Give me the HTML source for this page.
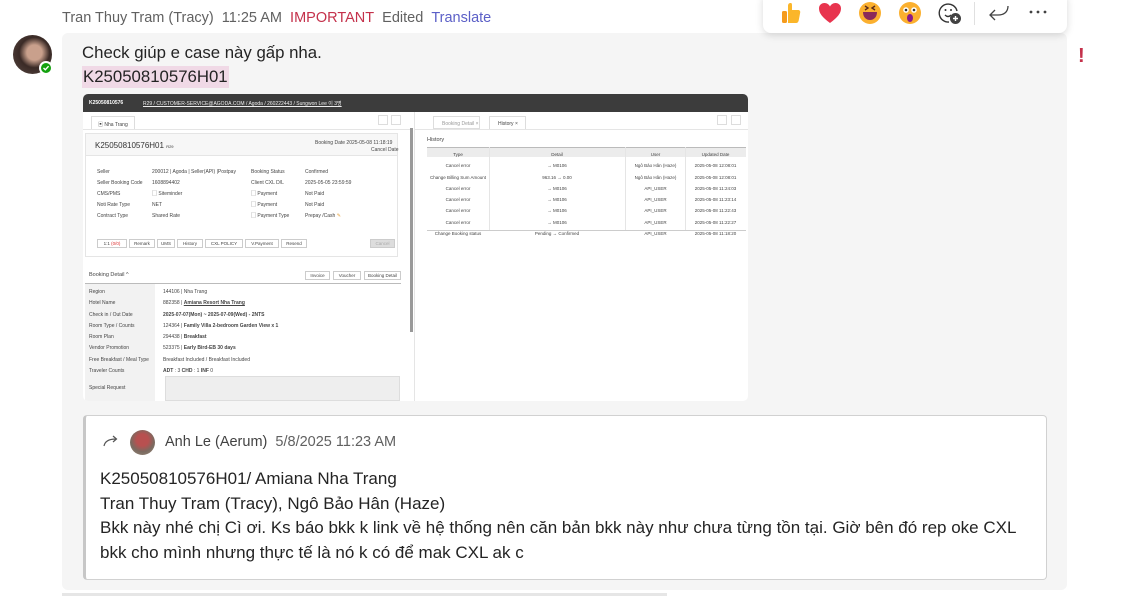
<!DOCTYPE html>
<html><head><meta charset="utf-8"><style>
*{margin:0;padding:0;box-sizing:border-box}
body{width:1128px;height:596px;background:#fff;font-family:"Liberation Sans","Noto Sans CJK SC",sans-serif;position:relative;overflow:hidden;color:#242424}
.a{position:absolute;white-space:nowrap}
.hdr{top:10px;left:62px;font-size:14.5px;color:#616161}
.bubble{left:62px;top:33px;width:1005px;height:557px;background:#f5f5f5;border-radius:6px}
.msg{font-size:16.8px;color:#242424}
.ss{left:83px;top:94px;width:665px;height:307px;background:#fff;border-radius:5px;overflow:hidden;font-size:5px;color:#444}
.ss .a{font-size:5px}
.b{font-weight:bold}
.btn{position:absolute;border:1px solid #ccc;height:9px;font-size:4.5px;line-height:8px;text-align:center;background:#fff}
.quote{left:83px;top:415px;width:964px;height:165px;background:#fff;border:1px solid #d1d1d1;border-left:3px solid #c7c7c7;border-radius:4px}
.q{font-size:17px;color:#242424}
.react{left:763px;top:-8px;width:304px;height:41px;background:#fff;border-radius:8px;box-shadow:0 2px 8px rgba(0,0,0,.15)}
.col{position:absolute;top:0;text-align:center;line-height:11.3px;font-size:4.5px!important}
</style></head><body>
<div class="a hdr">Tran Thuy Tram (Tracy)&nbsp;&nbsp;11:25 AM&nbsp;&nbsp;<span style="color:#c4314b">IMPORTANT</span>&nbsp;&nbsp;Edited&nbsp;&nbsp;<span style="color:#5b5fc7">Translate</span></div>
<div class="a" style="left:13px;top:35px;width:39px;height:39px;border-radius:50%;background:radial-gradient(circle at 55% 45%,#c9a08c 0 25%,#3a2a26 50%,#5a4a44 100%)"></div>
<div class="a" style="left:39px;top:61px;width:14px;height:14px;border-radius:50%;background:#13a10e;border:2px solid #fff"><svg width="10" height="10" viewBox="0 0 10 10" style="position:absolute;left:0;top:0"><path d="M2.5 5l1.8 1.8 3.3-3.6" stroke="#fff" stroke-width="1.4" fill="none"/></svg></div>
<div class="a bubble"></div>
<div class="a msg" style="left:82px;top:43px">Check giúp e case này gấp nha.</div>
<div class="a msg" style="left:82px;background:#f0d9e6;padding:0 1px;height:22px;line-height:22px;top:66px">K25050810576H01</div>
<div class="a" style="left:1078px;top:45px;color:#c4314b;font-size:20px;font-weight:bold">!</div>

<div class="a ss">
 <div class="a" style="left:0;top:0;width:665px;height:18px;background:#3c3c3c"></div>
 <div class="a b" style="left:6px;top:6px;color:#fff">K25050810576</div>
 <div class="a" style="left:60px;top:6px;color:#eee;text-decoration:underline">R29 / CUSTOMER-SERVICE@AGODA.COM / Agoda / 260222443 / Sungwon Lee 이 3명</div>
 <div class="a" style="left:8px;top:22px;width:44px;height:14px;border:1px solid #ddd;border-bottom:none;background:#fff;padding:4px 6px">▣ Nha Trang</div>
 <div class="a" style="left:0;top:35px;width:327px;height:1px;background:#e5e5e5"></div>
 <div class="a" style="left:295px;top:21px;width:10px;height:10px;border:1px solid #ddd"></div>
 <div class="a" style="left:308px;top:21px;width:10px;height:10px;border:1px solid #ddd"></div>
 <div class="a" style="left:2px;top:39px;width:313px;height:124px;border:1px solid #e5e5e5;background:#fff"></div>
 <div class="a" style="left:3px;top:40px;width:311px;height:22px;background:#f7f7f7;border-bottom:1px solid #e5e5e5"></div>
 <div class="a" style="left:12px;top:47px;font-size:8px;color:#333">K25050810576H01 <span style="font-size:4px">R29</span></div>
 <div class="a" style="left:232px;top:46px;text-align:right">Booking Date 2025-05-08 11:18:19</div>
 <div class="a" style="left:288px;top:53px">Cancel Date</div>
 <div class="a" style="left:14px;top:73px;line-height:11px">Seller<br>Seller Booking Code<br>CMS/PMS<br>Noti Rate Type<br>Contract Type</div>
 <div class="a" style="left:69px;top:73px;line-height:11px">200012 | Agoda | Seller(API) |Postpay<br>1608894402<br>▢ Siteminder<br>NET<br>Shared Rate</div>
 <div class="a" style="left:168px;top:73px;line-height:11px">Booking Status<br>Client CXL D/L<br>▢ Payment<br>▢ Payment<br>▢ Payment Type</div>
 <div class="a" style="left:222px;top:73px;line-height:11px">Confirmed<br>2025-05-05 23:59:59<br>Not Paid<br>Not Paid<br>Prepay /Cash <span style="color:#e8a33c">✎</span></div>
 <div class="btn" style="left:14px;top:145px;width:30px">1:1 <span style="color:#d33">(0/0)</span></div>
 <div class="btn" style="left:46px;top:145px;width:26px">Remark</div>
 <div class="btn" style="left:74px;top:145px;width:18px">UMS</div>
 <div class="btn" style="left:94px;top:145px;width:26px">History</div>
 <div class="btn" style="left:122px;top:145px;width:38px">CXL POLICY</div>
 <div class="btn" style="left:162px;top:145px;width:34px">V.Payment</div>
 <div class="btn" style="left:198px;top:145px;width:26px">Resend</div>
 <div class="btn" style="left:287px;top:145px;width:25px;background:#ddd;color:#aaa">Cancel</div>
 <div class="a" style="left:6px;top:178px;font-size:5.5px">Booking Detail ^</div>
 <div class="btn" style="left:222px;top:177px;width:25px">Invoice</div>
 <div class="btn" style="left:250px;top:177px;width:28px">Voucher</div>
 <div class="btn" style="left:281px;top:177px;width:37px">Booking Detail</div>
 <div class="a" style="left:2px;top:189px;width:316px;height:1px;background:#bbb"></div>
 <div class="a" style="left:2px;top:190px;width:70px;height:117px;background:#f2f2f2"></div>
 <div class="a" style="left:6px;top:193px;line-height:11.3px">Region<br>Hotel Name<br>Check in / Out Date<br>Room Type / Counts<br>Room Plan<br>Vendor Promotion<br>Free Breakfast / Meal Type<br>Traveler Counts</div>
 <div class="a" style="left:80px;top:193px;line-height:11.3px">144106 | Nha Trang<br>882358 | <b><u>Amiana Resort Nha Trang</u></b><br><b>2025-07-07(Mon) ~ 2025-07-09(Wed) - 2NTS</b><br>124364 | <b>Family Villa 2-bedroom Garden View x 1</b><br>294438 | <b>Breakfast</b><br>523375 | <b>Early Bird-EB 30 days</b><br>Breakfast Included / Breakfast Included<br><b>ADT</b> : 3 <b>CHD</b> : 1 <b>INF</b> 0</div>
 <div class="a" style="left:6px;top:291px">Special Request</div>
 <div class="a" style="left:82px;top:282px;width:235px;height:25px;background:#eee;border:1px solid #ddd"></div>
 <div class="a" style="left:327px;top:34px;width:3px;height:204px;background:#999"></div>
 <div class="a" style="left:331px;top:18px;width:1px;height:289px;background:#e5e5e5"></div>
 <div class="a" style="left:350px;top:22px;width:47px;height:13px;border:1px solid #ddd;padding:4px 8px;color:#999">Booking Detail ×</div>
 <div class="a" style="left:406px;top:22px;width:37px;height:14px;border:1px solid #ddd;border-bottom:none;background:#fff;padding:4px 8px">History ×</div>
 <div class="a" style="left:332px;top:35px;width:333px;height:1px;background:#e5e5e5"></div>
 <div class="a" style="left:634px;top:21px;width:10px;height:10px;border:1px solid #ddd"></div>
 <div class="a" style="left:648px;top:21px;width:10px;height:10px;border:1px solid #ddd"></div>
 <div class="a" style="left:344px;top:43px;font-size:5.5px">History</div>
 <div class="a" style="left:344px;top:53px;width:319px;height:10px;background:#ececec;border-top:1px solid #bbb"></div>
 <div class="a" style="left:344px;top:55px;width:319px;height:100px">
  <div class="col" style="left:0;width:62px">Type<br>Cancel error<br>Change Billing Sum Amount<br>Cancel error<br>Cancel error<br>Cancel error<br>Cancel error<br>Change Booking status</div>
  <div class="col" style="left:62px;width:136px">Detail<br>→ M0106<br>963.16 → 0.00<br>→ M0106<br>→ M0106<br>→ M0106<br>→ M0106<br>Pending → Confirmed</div>
  <div class="col" style="left:199px;width:59px">User<br>Ngô Bảo Hân (Haze)<br>Ngô Bảo Hân (Haze)<br>API_USER<br>API_USER<br>API_USER<br>API_USER<br>API_USER</div>
  <div class="col" style="left:258px;width:61px">Updated Date<br>2025-05-08 12:08:01<br>2025-05-08 12:08:01<br>2025-05-08 11:24:03<br>2025-05-08 11:23:14<br>2025-05-08 11:22:43<br>2025-05-08 11:22:27<br>2025-05-08 11:18:20</div>
  <div class="a" style="left:62px;top:-2px;width:1px;height:83px;background:#e5e5e5"></div>
  <div class="a" style="left:198px;top:-2px;width:1px;height:83px;background:#e5e5e5"></div>
  <div class="a" style="left:258px;top:-2px;width:1px;height:83px;background:#e5e5e5"></div>
  <div class="a" style="left:0;top:81px;width:319px;height:1px;background:#ccc"></div>
 </div>
</div>

<div class="a quote"></div>
<svg class="a" style="left:103px;top:434px" width="16" height="14" viewBox="0 0 16 14"><path d="M1 12c1-5 5-7 12-7M10 2l3.5 3-3.5 3" stroke="#555" stroke-width="1.2" fill="none"/></svg>
<div class="a" style="left:130px;top:430px;width:25px;height:25px;border-radius:50%;background:radial-gradient(circle at 50% 40%,#b85050 0 30%,#7a6a60 60%,#9a8a7a 100%)"></div>
<div class="a" style="left:165px;top:434px;font-size:14.5px;color:#424242">Anh Le (Aerum)&nbsp;&nbsp;<span style="color:#616161">5/8/2025 11:23 AM</span></div>
<div class="a q" style="left:100px;top:467px;line-height:24.5px">K25050810576H01/ Amiana Nha Trang<br>Tran Thuy Tram (Tracy), Ngô Bảo Hân (Haze)<br>Bkk này nhé chị Cì ơi. Ks báo bkk k link về hệ thống nên căn bản bkk này như chưa từng tồn tại. Giờ bên đó rep oke CXL<br>bkk cho mình nhưng thực tế là nó k có để mak CXL ak c</div>
<div class="a" style="left:62px;top:593px;width:605px;height:3px;background:#e6e6e6"></div>

<div class="a react"></div>
<svg class="a" style="left:818px;top:2px" width="24" height="22" viewBox="0 0 24 22"><path d="M12 21C4 15 1 11 1 6.5 1 3 3.5 1 6.5 1 9 1 11 2.5 12 4.5 13 2.5 15 1 17.5 1 20.5 1 23 3 23 6.5 23 11 20 15 12 21z" fill="#e8344e"/></svg>
<svg class="a" style="left:779px;top:1px" width="24" height="24" viewBox="0 0 24 24"><path d="M9 10V5c0-2 1-3 2.5-3S13 3 13 5v4h6c1.5 0 2.5 1 2.2 2.5l-1.5 8C19.4 21 18.5 22 17 22H9z" fill="#fbb62a"/><rect x="3" y="10" width="5" height="12" rx="1.5" fill="#f59b1c"/></svg>
<svg class="a" style="left:858px;top:1px" width="24" height="24"><circle cx="12" cy="12" r="11" fill="#fbb02f"/><path d="M5 11h14c0 5-3 8-7 8s-7-3-7-8z" fill="#8a2a5a"/><path d="M7 5l3 2-3 2M17 5l-3 2 3 2" stroke="#5a2a1a" stroke-width="1.4" fill="none"/></svg>
<svg class="a" style="left:898px;top:1px" width="24" height="24"><circle cx="12" cy="12" r="11" fill="#fbb02f"/><circle cx="8" cy="9" r="2.8" fill="#fff"/><circle cx="16" cy="9" r="2.8" fill="#fff"/><circle cx="8" cy="9" r="1.3" fill="#333"/><circle cx="16" cy="9" r="1.3" fill="#333"/><ellipse cx="12" cy="17" rx="3" ry="4" fill="#8a1a8a"/></svg>
<svg class="a" style="left:937px;top:1px" width="26" height="24"><path d="M20 10A9 9 0 1 0 12 21" stroke="#333" stroke-width="1.4" fill="none"/><circle cx="8.5" cy="9" r="1" fill="#333"/><circle cx="14" cy="9" r="1" fill="#333"/><path d="M8 14c2 2 4 2 6 0" stroke="#333" stroke-width="1.3" fill="none"/><circle cx="18.5" cy="17.5" r="5.5" fill="#424242"/><path d="M18.5 15v5M16 17.5h5" stroke="#fff" stroke-width="1.4"/></svg>
<div class="a" style="left:974px;top:2px;width:1px;height:23px;background:#e0e0e0"></div>
<svg class="a" style="left:988px;top:4px" width="22" height="18"><path d="M20 2c0 6-4 9-10 9H2M7 6l-5 5 5 5" stroke="#424242" stroke-width="1.3" fill="none"/></svg>
<svg class="a" style="left:1029px;top:10px" width="18" height="4"><circle cx="2" cy="2" r="1.4" fill="#424242"/><circle cx="9" cy="2" r="1.4" fill="#424242"/><circle cx="16" cy="2" r="1.4" fill="#424242"/></svg>
</body></html>
